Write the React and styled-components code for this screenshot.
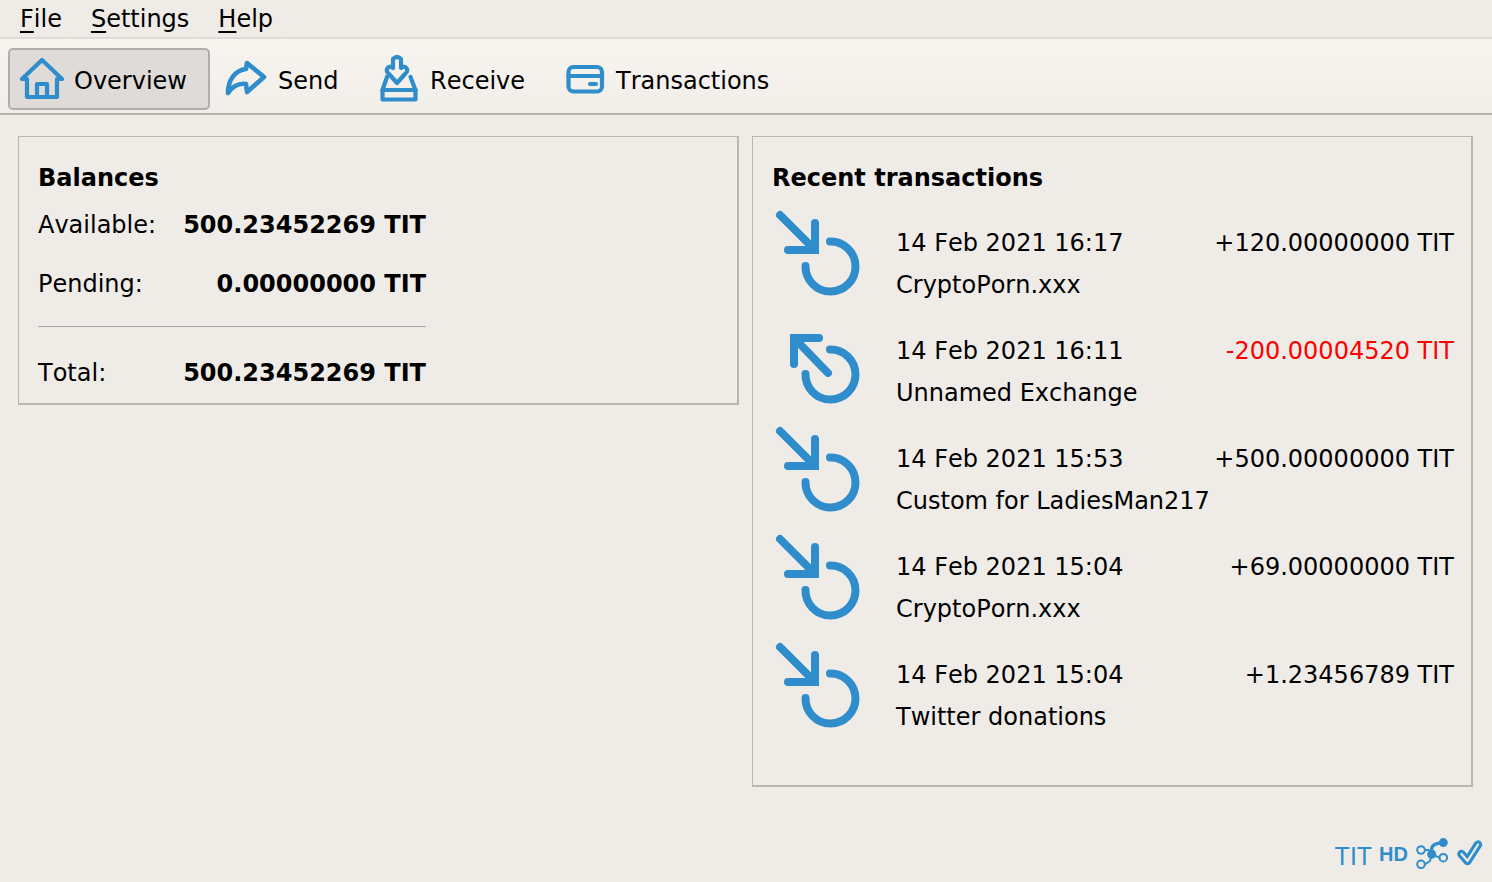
import React from 'react';
import styled, { createGlobalStyle } from 'styled-components';

const GlobalStyle = createGlobalStyle`
  html, body, #root { margin: 0; height: 100%; }
  body {
    background: #efece8;
    color: #000;
    font-family: 'DejaVu Sans', sans-serif;
    font-size: 24px;
    font-kerning: none;
    overflow: hidden;
  }
`;

const Window = styled.div`
  height: 882px;
  display: flex;
  flex-direction: column;
`;

const MenuBar = styled.nav`
  height: 39px;
  display: flex;
  gap: 1px;
  background: #efece8;
`;

const MenuItem = styled.div`
  height: 37px;
  padding: 0 8px 0 20px;
  line-height: 38px;
  border-bottom: 2px solid #dfdbd6;
  u { text-underline-offset: 4px; text-decoration-thickness: 2px; }
`;

const MenuFill = styled.div`
  flex: 1;
  height: 37px;
  border-bottom: 2px solid #dfdbd6;
`;

const ToolBar = styled.div`
  height: 74px;
  display: flex;
  align-items: center;
  gap: 1px;
  padding-left: 8px;
  background: linear-gradient(#f8f5f0, #f1eeea);
  border-bottom: 2px solid #b8b5b1;
`;

const ToolButton = styled.button`
  height: 62px;
  width: ${p => p.$width}px;
  margin-top: 6px;
  display: flex;
  align-items: center;
  gap: ${p => p.$gap}px;
  padding: 0 0 0 ${p => p.$pad}px;
  font: inherit;
  color: #000;
  border: ${p => (p.$active ? '2px solid #b0adaa' : '2px solid transparent')};
  border-radius: 5px;
  background: ${p => (p.$active ? '#dedbd8' : 'transparent')};
`;

const ToolLabel = styled.span`
  margin-top: 3px;
`;

const ToolIcon = styled.svg`
  flex: none;
  fill: none;
  stroke: #2f8dcb;
  stroke-width: ${p => p.$stroke || 4.2};
  stroke-linecap: round;
  stroke-linejoin: round;
`;

const Content = styled.main`
  flex: 1;
  display: grid;
  grid-template-columns: 721px 721px;
  gap: 13px;
  align-items: start;
  padding: 21px 19px 0 18px;
`;

const Panel = styled.section`
  height: ${p => p.$height}px;
  box-sizing: border-box;
  border: 1px solid #bab7b3;
  border-width: 1px 2px 2px 1px;
  padding: 25px 17px 0 19px;
`;

const PanelTitle = styled.h2`
  margin: 0;
  font-size: 24px;
  line-height: 32px;
  font-weight: 700;
`;

const BalanceGrid = styled.div`
  width: 388px;
  margin-top: 15px;
`;

const BalanceRow = styled.div`
  display: flex;
  justify-content: space-between;
  height: ${p => p.$height}px;
  line-height: 32px;
  padding-top: ${p => p.$top || 0}px;
`;

const Amount = styled.span`
  font-weight: 700;
`;

const Rule = styled.hr`
  margin: 0;
  border: 0;
  border-top: 1px solid #a8a5a2;
  height: 0;
`;

const TxList = styled.div`
  margin-top: 6px;
`;

const TxRow = styled.div`
  display: flex;
  height: 108px;
`;

const TxIcon = styled.svg`
  flex: none;
  width: 124px;
  height: 108px;
  fill: none;
  stroke: #2f8dcb;
  stroke-width: 8;
  stroke-linecap: round;
  stroke-linejoin: miter;
`;

const TxBody = styled.div`
  flex: 1;
  padding-top: 27px;
`;

const TxLine = styled.div`
  display: flex;
  justify-content: space-between;
  height: 42px;
  line-height: 32px;
`;

const TxAmount = styled.span`
  color: ${p => (p.$negative ? '#ff0000' : '#000')};
`;

const StatusBar = styled.footer`
  height: 54px;
  display: flex;
  align-items: center;
  justify-content: flex-end;
  padding: 0 8px 0 0;
  color: #2f8dcb;
`;

const Unit = styled.span`
  font-size: 25px;
  font-family: 'Liberation Sans', sans-serif;
  margin: 2px 7px 0 0;
`;

const Hd = styled.span`
  font-family: 'Liberation Sans', sans-serif;
  font-weight: 700;
  font-size: 20px;
  margin: 0 8px 2px 0;
`;

const NetworkSvg = styled.svg`
  margin-right: 6px;
`;

const HomeIcon = () => (
  <ToolIcon width="46" height="46" viewBox="20 55 46 46">
    <path d="M27 78H22L42 59L62 78H57V96H27V78Z" />
    <path d="M37 96V83H47V96" />
  </ToolIcon>
);

const SendIcon = () => (
  <ToolIcon width="46" height="46" viewBox="223 55 46 46" $stroke={4.6}>
    <path d="M228 92C228 78 236 69 246 68L247 62L264 76L247 91L246 83C239 82 233 85 228 92Z" />
  </ToolIcon>
);

const ReceiveIcon = () => (
  <ToolIcon width="40" height="50" viewBox="379 52 40 50">
    <path d="M387 75L382.5 88V97.5H415.5V88L410.5 75" />
    <path d="M382.5 88H415.5" />
    <path d="M393 57Q397 53 401 57V66Q405 63 407 67Q408 70 405 72L397 81L389 72Q386 70 387 67Q389 63 393 66Z" />
  </ToolIcon>
);

const CardIcon = () => (
  <ToolIcon width="40" height="34" viewBox="564 62 40 34">
    <rect x="567.5" y="67" width="33.5" height="24.5" rx="5" />
    <path d="M567.5 76H601" />
    <path d="M589 84H595" />
  </ToolIcon>
);

const IncomingIcon = () => (
  <TxIcon viewBox="12 0 124 108">
    <path d="M20 15L53 48" />
    <path d="M28 50H55V23" />
    <path d="M70 41.5A25 25 0 1 1 45.5 66" />
  </TxIcon>
);

const OutgoingIcon = () => (
  <TxIcon viewBox="12 0 124 108">
    <path d="M68 65L36 32" />
    <path d="M59 30H34V56" />
    <path d="M70 41.5A25 25 0 1 1 45.5 66" />
  </TxIcon>
);

const NetworkIcon = () => (
  <NetworkSvg width="34" height="34" viewBox="1416 838 34 34">
    <g fill="none" stroke="#2f8dcb" strokeWidth="2">
      <circle cx="1421" cy="850" r="3.8" />
      <circle cx="1443.3" cy="857.7" r="3.8" />
      <circle cx="1421" cy="864.3" r="3.8" />
      <path d="M1425 850H1428.5L1431.7 854.3L1439.5 857.7M1425 864.3L1430 861L1431.7 854.3" />
    </g>
    <path d="M1431.7 854.3V848Q1432 844 1443.3 842.3" fill="none" stroke="#2f8dcb" strokeWidth="3.4" />
    <circle cx="1443.3" cy="842.6" r="4.5" fill="#2f8dcb" />
    <circle cx="1431.7" cy="854.3" r="4.5" fill="#2f8dcb" />
  </NetworkSvg>
);

const CheckIcon = () => (
  <svg width="28" height="32" viewBox="1456 841 28 32" fill="none" strokeLinecap="round" strokeLinejoin="round">
    <path d="M1461.5 856L1467.5 863L1478 846.5" stroke="#2f8dcb" strokeWidth="8.4" />
    <path d="M1461.5 856L1467.5 863L1478 846.5" stroke="#efece8" strokeWidth="2.2" />
  </svg>
);

const menus = [
  ['F', 'ile'],
  ['S', 'ettings'],
  ['H', 'elp'],
];

const transactions = [
  { date: '14 Feb 2021 16:17', amount: '+120.00000000 TIT', label: 'CryptoPorn.xxx' },
  { date: '14 Feb 2021 16:11', amount: '-200.00004520 TIT', label: 'Unnamed Exchange', negative: true },
  { date: '14 Feb 2021 15:53', amount: '+500.00000000 TIT', label: 'Custom for LadiesMan217' },
  { date: '14 Feb 2021 15:04', amount: '+69.00000000 TIT', label: 'CryptoPorn.xxx' },
  { date: '14 Feb 2021 15:04', amount: '+1.23456789 TIT', label: 'Twitter donations' },
];

export default function App() {
  return (
    <Window>
      <GlobalStyle />
      <MenuBar>
        {menus.map(([key, rest]) => (
          <MenuItem key={key}><u>{key}</u>{rest}</MenuItem>
        ))}
        <MenuFill />
      </MenuBar>
      <ToolBar>
        <ToolButton $active $width={202} $pad={10} $gap={8}><HomeIcon /><ToolLabel>Overview</ToolLabel></ToolButton>
        <ToolButton $width={150} $pad={10} $gap={9}><SendIcon /><ToolLabel>Send</ToolLabel></ToolButton>
        <ToolButton $width={188} $pad={15} $gap={11}><ReceiveIcon /><ToolLabel>Receive</ToolLabel></ToolButton>
        <ToolButton $width={240} $pad={12} $gap={11}><CardIcon /><ToolLabel>Transactions</ToolLabel></ToolButton>
      </ToolBar>
      <Content>
        <Panel $height={269}>
          <PanelTitle>Balances</PanelTitle>
          <BalanceGrid>
            <BalanceRow $height={59}><span>Available:</span><Amount>500.23452269 TIT</Amount></BalanceRow>
            <BalanceRow $height={58}><span>Pending:</span><Amount>0.00000000 TIT</Amount></BalanceRow>
            <Rule />
            <BalanceRow $height={51} $top={30}><span>Total:</span><Amount>500.23452269 TIT</Amount></BalanceRow>
          </BalanceGrid>
        </Panel>
        <Panel $height={651}>
          <PanelTitle>Recent transactions</PanelTitle>
          <TxList>
            {transactions.map((tx, i) => (
              <TxRow key={i}>
                {tx.negative ? <OutgoingIcon /> : <IncomingIcon />}
                <TxBody>
                  <TxLine>
                    <span>{tx.date}</span>
                    <TxAmount $negative={tx.negative}>{tx.amount}</TxAmount>
                  </TxLine>
                  <TxLine><span>{tx.label}</span></TxLine>
                </TxBody>
              </TxRow>
            ))}
          </TxList>
        </Panel>
      </Content>
      <StatusBar>
        <Unit>TIT</Unit>
        <Hd>HD</Hd>
        <NetworkIcon />
        <CheckIcon />
      </StatusBar>
    </Window>
  );
}
